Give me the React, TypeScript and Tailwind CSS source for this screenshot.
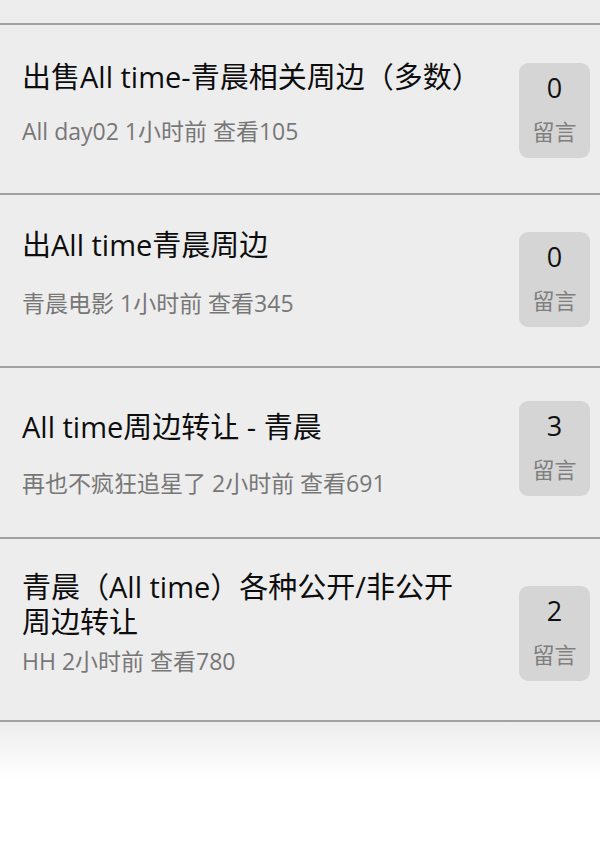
import React from "react";

type Row = {
  title: React.ReactNode;
  meta: string;
  count: string;
  h: number;
  pt: number;
  gap: number;
  badgeTop: number;
};

const rows: Row[] = [
  { title: "出售All time-青晨相关周边（多数）", meta: "All day02 1小时前 查看105", count: "0", h: 168, pt: 34, gap: 23, badgeTop: 38 },
  { title: "出All time青晨周边", meta: "青晨电影 1小时前 查看345", count: "0", h: 171, pt: 32, gap: 27, badgeTop: 37 },
  { title: "All time周边转让 - 青晨", meta: "再也不疯狂追星了 2小时前 查看691", count: "3", h: 169, pt: 41, gap: 25, badgeTop: 33 },
  {
    title: (
      <>
        青晨（All time）各种公开/非公开
        <br />
        周边转让
      </>
    ),
    meta: "HH 2小时前 查看780",
    count: "2",
    h: 181,
    pt: 30,
    gap: 8,
    badgeTop: 47,
  },
];

export default function App() {
  return (
    <div
      className="w-[600px] h-[845px] bg-white overflow-hidden"
      style={{ fontFamily: '"Open Sans", "Noto Sans CJK SC", sans-serif' }}
    >
      <div className="bg-[#eeedee]">
        <div className="h-[23px]" />
        {rows.map((r, i) => (
          <div key={i} className="border-t-2 border-[#a2a2a2]">
            <div
              className="flex justify-between items-start pl-[22px] pr-[10px]"
              style={{ height: r.h }}
            >
              <div className="flex flex-col" style={{ paddingTop: r.pt }}>
                <div className="text-[29px] leading-[35px] text-[#0d0d0d] whitespace-nowrap">
                  {r.title}
                </div>
                <div
                  className="text-[23px] leading-[29px] text-[#777777] whitespace-nowrap"
                  style={{ marginTop: r.gap }}
                >
                  {r.meta}
                </div>
              </div>
              <div
                className="w-[71px] h-[95px] rounded-[9px] bg-[#d5d5d5] flex flex-col items-center pt-[11px]"
                style={{ marginTop: r.badgeTop }}
              >
                <div className="text-[27px] leading-[28px] text-[#111111]">{r.count}</div>
                <div className="text-[22px] leading-[28px] text-[#7f7f7f] mt-[15px]">留言</div>
              </div>
            </div>
          </div>
        ))}
        <div className="border-t-2 border-[#a2a2a2]" />
      </div>
      <div className="h-[58px] bg-gradient-to-b from-[#eeedee] to-white" />
    </div>
  );
}
